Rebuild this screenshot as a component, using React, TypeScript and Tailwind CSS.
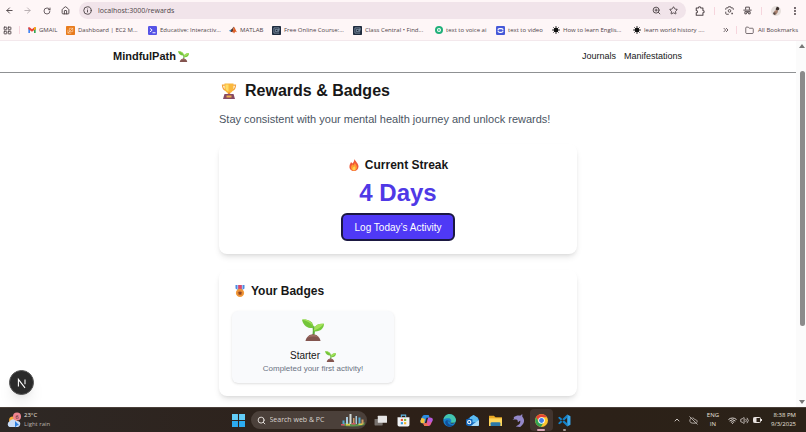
import type { ReactNode } from 'react'
import {
  ArrowLeft,
  ArrowRight,
  ChevronUp,
  ChevronsRight,
  CloudOff,
  EllipsisVertical,
  Folder,
  House,
  Info,
  LayoutGrid,
  RotateCw,
  Search,
  Star,
  Volume2,
  Wifi,
  ZoomIn,
} from 'lucide-react'

const Seedling = ({ className }: { className: string }) => (
  <svg viewBox="0 0 32 32" className={className} aria-hidden="true">
    <path d="M15 24C16 19 16 15 15 11l3-1c1 5 1 9 0 14z" fill="#5aa83a" />
    <path d="M16 13C10 14 2 11 0 1c8-1 16 2 17 11z" fill="#74c53a" />
    <path d="M0 1c6 1 12 4 16 9C13 3 8 0 0 1z" fill="#a5e25c" />
    <path d="M17 18c0-8 6-12 15-11 0 7-6 12-15 11z" fill="#74c93b" />
    <path d="M17 17c4-1 10-4 15-10-9-1-14 3-15 10z" fill="#a3e05a" />
    <path d="M5 32c1-6 6-10 11-10s10 4 11 10z" fill="#83544f" />
    <path d="M8 27c2-3 5-4 8-4 4 0 7 2 9 4-5-2-11-2-17 0z" fill="#a06f65" />
  </svg>
)

const Trophy = () => (
  <svg viewBox="0 0 32 32" className="size-4" aria-hidden="true">
    <path
      d="M8 4H3c0 7 3 10 8 11M24 4h5c0 7-3 10-8 11"
      fill="none"
      stroke="#f3a33a"
      strokeWidth="2.5"
    />
    <path d="M7 1h18v8c0 7-4 11-9 11S7 16 7 9z" fill="#fbb83c" />
    <path d="M9 3h6v14C10 15 9 12 9 9z" fill="#ffdc66" />
    <path d="M14 19h4l1 5h-6z" fill="#e78a3b" />
    <path d="M7 22h18l3 10H4z" fill="#874a62" />
    <path d="M11 25h10v4H11z" fill="#efad4b" />
  </svg>
)

const Flame = () => (
  <svg viewBox="0 0 32 32" className="size-3" aria-hidden="true">
    <path
      d="M17 0c2 6 10 10 11 19 0 8-5 13-12 13S3 27 4 19c0-5 3-7 4-11l4 4c3-3 5-7 5-12z"
      fill="#ef5736"
    />
    <path
      d="M18 9c1 5 6 7 6 13 0 5-4 9-8 9s-8-3-8-8c0-4 2-6 4-9l2 3c2-2 4-4 4-8z"
      fill="#ff9b32"
    />
    <path d="M17 19c4 3 4 11-1 11-4 0-6-5-2-8 2-1 3-2 3-3z" fill="#ffd250" />
  </svg>
)

const Medal = () => (
  <svg viewBox="0 0 32 32" className="size-3" aria-hidden="true">
    <path d="M4 0h24v9l-7 5H11L4 9z" fill="#4d8be0" />
    <path d="M11 0h10v13H11z" fill="#df4668" />
    <path d="M9 0h2v12H9zM21 0h2v12h-2z" fill="#c6dbff" />
    <circle cx="16" cy="21" r="11" fill="#f29a3b" />
    <circle cx="16" cy="21" r="7" fill="#e58a34" />
    <path d="m16 16 2 3 4 1-3 3 1 3-4-1-4 1 1-3-3-3 4-1z" fill="#8a4426" />
  </svg>
)

const GmailIcon = () => (
  <svg viewBox="0 0 24 24" className="size-2 shrink-0">
    <path d="M1 4v17h5V10z" fill="#4285f4" />
    <path d="M23 4v17h-5V10z" fill="#34a853" />
    <path d="M1 4h4l7 6 7-6h4v5l-11 8L1 9z" fill="#ea4335" />
    <path d="M19 4h4v5l-5 4V5z" fill="#fbbc04" />
  </svg>
)

const AwsIcon = () => (
  <svg viewBox="0 0 24 24" className="size-[9px] shrink-0">
    <rect width="24" height="24" rx="2" fill="#e87b1c" />
    <path
      d="M5 10v9h9M9 6h9v9H9zM5 19 19 5"
      fill="none"
      stroke="#fde3c6"
      strokeWidth="1.5"
    />
  </svg>
)

const EducativeIcon = () => (
  <svg viewBox="0 0 24 24" className="size-[9px] shrink-0">
    <rect width="24" height="24" rx="3" fill="#5653e6" />
    <path
      d="m5 6 6 5-6 5M12 18h8"
      fill="none"
      stroke="#fff"
      strokeWidth="2.5"
    />
  </svg>
)

const MatlabIcon = () => (
  <svg viewBox="0 0 24 24" className="size-2 shrink-0">
    <path d="m0 14 7-4 4 3-5 5z" fill="#3d8bc4" />
    <path d="M7 10c4-2 5-8 8-8l-4 16-5 0z" fill="#59352c" />
    <path d="M15 2c3 2 5 11 9 17-4-3-6-2-9 4-1-4-3-5-6-4 4-4 4-11 6-17z" fill="#df6027" />
  </svg>
)

const ClassCentralIcon = () => (
  <svg viewBox="0 0 24 24" className="size-[9px] shrink-0">
    <rect width="24" height="24" rx="2" fill="#1d2a3d" />
    <path
      d="M19 5H5v14h14M19 9H9v6h10M14 12h5V5"
      fill="none"
      stroke="#a9bdd0"
      strokeWidth="1.6"
    />
  </svg>
)

const VoiceIcon = () => (
  <svg viewBox="0 0 24 24" className="size-2 shrink-0">
    <circle cx="12" cy="12" r="12" fill="#20b07a" />
    <circle cx="12" cy="12" r="6" fill="#fff" />
    <path d="m10 8 6 4-6 4z" fill="#20b07a" />
  </svg>
)

const VideoIcon = () => (
  <svg viewBox="0 0 24 24" className="size-[9px] shrink-0">
    <rect width="24" height="24" rx="3" fill="#4558d8" />
    <rect x="5" y="7" width="14" height="10" rx="5" fill="none" stroke="#fff" strokeWidth="3" />
    <path d="M3 12h4M17 12h4" stroke="#4558d8" strokeWidth="2" />
  </svg>
)

const BurstIcon = () => (
  <svg viewBox="0 0 24 24" className="size-2 shrink-0">
    <circle cx="12" cy="12" r="7" fill="#111" />
    <path
      d="M12 0v24M0 12h24M4 4l16 16M20 4 4 20"
      stroke="#111"
      strokeWidth="2.5"
    />
  </svg>
)

const bookmarks = [
  { label: 'GMAIL', icon: <GmailIcon />, width: 'w-[38px]' },
  { label: 'Dashboard | EC2 M...', icon: <AwsIcon />, width: 'w-[82px]' },
  { label: 'Educative: Interactiv...', icon: <EducativeIcon />, width: 'w-[81px]' },
  { label: 'MATLAB', icon: <MatlabIcon />, width: 'w-[43px]' },
  { label: 'Free Online Course:...', icon: <ClassCentralIcon />, width: 'w-[81px]' },
  { label: 'Class Central • Find...', icon: <ClassCentralIcon />, width: 'w-[82px]' },
  { label: 'text to voice ai', icon: <VoiceIcon />, width: 'w-[61px]' },
  { label: 'text to video', icon: <VideoIcon />, width: 'w-[56px]' },
  { label: 'How to learn Englis...', icon: <BurstIcon />, width: 'w-[81px]' },
  { label: 'learn world history ....', icon: <BurstIcon />, width: 'w-[81px]' },
]

const IconButton = ({
  label,
  className,
  children,
}: {
  label: string
  className: string
  children: ReactNode
}) => (
  <button
    type="button"
    aria-label={label}
    className={`flex shrink-0 items-center justify-center ${className}`}
  >
    {children}
  </button>
)

const BrowserBar = () => (
  <header className="border-b border-[#f3e8ec] bg-[#fef6f7] font-['Open_Sans','Noto_Sans',sans-serif] text-[#4f4549]">
    <div className="flex h-5 items-center pt-px">
      <IconButton label="Back" className="w-[18px]">
        <ArrowLeft className="size-[9px]" strokeWidth={2.5} />
      </IconButton>
      <IconButton label="Forward" className="w-[19px] text-[#b5acaf]">
        <ArrowRight className="size-[9px]" strokeWidth={2.5} />
      </IconButton>
      <IconButton label="Reload" className="w-[19px]">
        <RotateCw className="size-2" strokeWidth={2.5} />
      </IconButton>
      <IconButton label="Home" className="w-[19px]">
        <House className="size-[9px]" strokeWidth={2.5} />
      </IconButton>
      <div className="ml-1 flex h-[17px] flex-1 items-center rounded-full bg-[#f1e4ea] px-1">
        <Info className="size-[9px] shrink-0" strokeWidth={2.5} />
        <input
          type="text"
          aria-label="Address"
          defaultValue="localhost:3000/rewards"
          className="ml-[6px] min-w-0 flex-1 bg-transparent text-[7px] leading-3 outline-none"
        />
        <IconButton label="Zoom" className="w-[17px]">
          <ZoomIn className="size-[9px]" strokeWidth={2.5} />
        </IconButton>
        <IconButton label="Bookmark this page" className="w-[17px]">
          <Star className="size-[9px]" strokeWidth={2.5} />
        </IconButton>
      </div>
      <IconButton label="Extensions" className="w-[28px]">
        <svg viewBox="0 0 24 24" className="size-[10px]" fill="none" stroke="currentColor" strokeWidth="2.5" strokeLinejoin="round">
          <path d="M3 5h5c0-4 6-4 6 0h5v6c4 0 4 5 0 5v6H3v-6c4 0 4-5 0-5z" />
        </svg>
      </IconButton>
      <span className="h-2 w-px bg-[#f6d5dd]" />
      <IconButton label="Search with Lens" className="ml-1 w-5">
        <svg viewBox="0 0 24 24" className="size-[9px]" fill="none" stroke="currentColor" strokeWidth="2.5">
          <path d="M2 10V7q0-2 2-2h4l1-3h6l1 3h4q2 0 2 2v3M2 15v5q0 2 2 2h6" />
          <circle cx="12" cy="13" r="3.5" />
          <path d="M17 20h4" strokeWidth="4" />
        </svg>
      </IconButton>
      <IconButton label="Private" className="w-4">
        <svg viewBox="0 0 24 24" className="size-[9px]" fill="none" stroke="currentColor" strokeWidth="2.5">
          <path d="M7 10V3h10v7M1 11h22M5 15h14v6h-4l-1-4h-4l-1 4H5z" />
        </svg>
      </IconButton>
      <span className="ml-[6px] h-2 w-px bg-[#f6d5dd]" />
      <IconButton label="Profile" className="w-[28px]">
        <svg viewBox="0 0 24 24" className="size-[10px]">
          <circle cx="12" cy="12" r="12" fill="#e6dfdc" />
          <path d="M14 2c5 0 7 4 5 7l-5 3-3-4z" fill="#3b302d" />
          <path d="m8 12 6-3 3 5-5 7-6-2z" fill="#a8806f" />
          <path d="m6 15 5 1-1 6-5-3z" fill="#594b47" />
        </svg>
      </IconButton>
      <IconButton label="Menu" className="w-4 pr-[6px]">
        <EllipsisVertical className="size-[10px]" strokeWidth={3} />
      </IconButton>
    </div>
    <nav aria-label="Bookmarks" className="flex h-5 items-center pl-[3px] text-[6px] leading-3">
      <LayoutGrid className="size-[9px] shrink-0" strokeWidth={2.5} />
      <span className="mr-2 ml-[7px] h-2 w-px shrink-0 bg-[#f6d5dd]" />
      {bookmarks.map((item, index) => (
        <a
          href="#"
          key={index}
          className={`flex shrink-0 items-center gap-[3px] whitespace-nowrap ${item.width}`}
        >
          {item.icon}
          {item.label}
        </a>
      ))}
      <IconButton label="More bookmarks" className="ml-2">
        <ChevronsRight className="size-2" strokeWidth={2.5} />
      </IconButton>
      <span className="ml-auto h-2 w-px shrink-0 bg-[#f6d5dd]" />
      <a href="#" className="mr-2 ml-2 flex shrink-0 items-center gap-1 whitespace-nowrap">
        <Folder className="size-[9px]" strokeWidth={2} />
        All Bookmarks
      </a>
    </nav>
  </header>
)

const SiteHeader = () => (
  <header className="border-b border-[#8f9193]">
    <div className="mx-auto flex h-[31px] max-w-[570px] items-center justify-between">
      <a href="#" className="flex items-center gap-[2px] text-[11px] font-bold">
        MindfulPath <Seedling className="size-[11px]" />
      </a>
      <nav className="flex gap-2 pr-px text-[9px]">
        <a href="#">Journals</a>
        <a href="#">Manifestations</a>
      </nav>
    </div>
  </header>
)

const Rewards = () => (
  <main className="mx-auto w-full max-w-[358px] pt-[6px] pb-2">
    <h1 className="flex items-center gap-2 pl-[2px] text-base leading-6 font-bold">
      <Trophy /> Rewards &amp; Badges
    </h1>
    <p className="mt-2 text-[11px] leading-4 text-[#4b5563]">
      Stay consistent with your mental health journey and unlock rewards!
    </p>
    <section className="mt-[17px] flex flex-col items-center rounded-lg bg-white p-[13px] text-center shadow-md">
      <h2 className="flex items-center gap-[5px] text-xs leading-4 font-bold">
        <Flame /> Current Streak
      </h2>
      <p className="mt-2 text-2xl leading-6 font-bold text-[#4f39e6]">4 Days</p>
      <button
        type="button"
        className="mt-2 h-7 rounded-md border-2 border-[#1b1842] bg-[#4f39f6] px-3 text-[10px] text-white"
      >
        Log Today’s Activity
      </button>
    </section>
    <section className="mt-4 rounded-lg bg-white p-[13px] shadow-md">
      <h2 className="flex items-center gap-[5px] pl-[2px] text-xs leading-4 font-bold">
        <Medal /> Your Badges
      </h2>
      <div className="mt-3 grid grid-cols-2 gap-2">
        <div className="flex flex-col items-center rounded-md bg-[#f9fafc] p-2 text-center shadow-sm">
          <Seedling className="size-[22px]" />
          <h3 className="mt-2 flex items-center gap-[5px] text-[10px] leading-[14px]">
            Starter <Seedling className="size-[11px]" />
          </h3>
          <p className="text-[8px] leading-3 text-[#6a7282]">
            Completed your first activity!
          </p>
        </div>
      </div>
    </section>
  </main>
)

const Scrollbar = () => (
  <div className="flex w-[10px] flex-col items-center bg-[#fbfbfb] py-[2px] pl-[2px]" aria-hidden="true">
    <svg viewBox="0 0 6 6" className="size-[6px]">
      <path d="M3 1 6 5H0z" fill="#777" />
    </svg>
    <div className="mt-[22px] h-[255px] w-[5px] rounded-full bg-[#8b8b8b]" />
    <svg viewBox="0 0 6 6" className="mt-auto size-[6px]">
      <path d="M3 5 6 1H0z" fill="#777" />
    </svg>
  </div>
)

const taskbarApps = [
  {
    label: 'Task view',
    icon: (
      <svg viewBox="0 0 24 24" className="size-[13px]">
        <rect x="1" y="9" width="15" height="12" rx="1" fill="#77716d" />
        <rect x="7" y="3" width="17" height="13" rx="1" fill="#e6e5e5" />
      </svg>
    ),
  },
  {
    label: 'Microsoft Store',
    icon: (
      <svg viewBox="0 0 24 24" className="size-[13px]">
        <path d="M8 6V2h8v4" fill="none" stroke="#61b8e6" strokeWidth="2" />
        <path d="M1 6h22v14q0 3-3 3H4q-3 0-3-3z" fill="#f2f4f6" />
        <path d="M7 9h4v4H7z" fill="#e95030" />
        <path d="M13 9h4v4h-4z" fill="#7eb83b" />
        <path d="M7 15h4v4H7z" fill="#329bdc" />
        <path d="M13 15h4v4h-4z" fill="#f3b72f" />
      </svg>
    ),
  },
  {
    label: 'Copilot',
    icon: (
      <svg viewBox="0 0 24 24" className="size-[13px]">
        <path d="M8 2h8l2 5h-6L9 17H4q-4 0-3-5l3-7q1-3 4-3z" fill="#2b8ce0" />
        <path d="M1 12 3 7l6 2-1 8H4q-4 0-3-5z" fill="#f4c33c" />
        <path d="M15 7h5q4 0 3 5l-3 7q-1 3-4 3H8l-2-5h6z" fill="#e25c9c" />
        <path d="M15 7h5q4 0 3 5l-1 3-8-2z" fill="#b35be0" />
        <path d="m6 17 6 0 3 5H9q-2 0-3-5z" fill="#ef7548" />
      </svg>
    ),
  },
  {
    label: 'Edge',
    icon: (
      <svg viewBox="0 0 24 24" className="size-[13px]">
        <circle cx="12" cy="12" r="11.5" fill="#1782cd" />
        <path d="M1 10C2 4 7 0 12 0c7 0 12 6 12 11 0 5-5 7-10 5 3-3 1-8-4-8-4 0-7 1-9 2z" fill="#43c5ae" />
        <path d="M9 11c-2 6 3 11 11 9-6 6-15 3-16-4 0-3 2-5 5-5z" fill="#124f9a" />
        <path d="M11 11q-2 3 2 5l9 0q-3 2-8 1-3-1-3-6z" fill="#2e251f" />
      </svg>
    ),
  },
  {
    label: 'Outlook',
    icon: (
      <svg viewBox="0 0 24 24" className="size-[13px]">
        <path d="m3 9 11-7 10 7v13H3z" fill="#1d73c9" />
        <path d="m7 6 7-4 8 5v8H7z" fill="#5cbcf2" />
        <path d="m8 22 16-11v9q0 2-2 2z" fill="#a9dcf8" />
        <rect y="9" width="12" height="12" rx="2" fill="#1163b6" />
        <circle cx="6" cy="15" r="3" fill="none" stroke="#fff" strokeWidth="2" />
      </svg>
    ),
  },
  {
    label: 'File Explorer',
    icon: (
      <svg viewBox="0 0 24 24" className="size-[13px]">
        <path d="M0 3h9l3 3h12v16H0z" fill="#e9a823" />
        <path d="M0 8h24v14H0z" fill="#ffd65a" />
        <path d="M5 15h14q2 0 2 2v5H3v-5q0-2 2-2z" fill="#2b79a8" />
      </svg>
    ),
  },
  {
    label: 'MySQL Workbench',
    icon: (
      <svg viewBox="0 0 24 24" className="size-[13px]">
        <path
          d="M3 6c4-3 8-4 12-3l4-3v5c5 5 4 12-1 16l-3 3-8-1 5-3c3-2 4-5 3-8l-4 3-1-4c-3-1-6-1-9 0l3-3z"
          fill="#9488c9"
        />
      </svg>
    ),
  },
  {
    label: 'Chrome',
    active: true,
    icon: (
      <svg viewBox="0 0 24 24" className="size-[13px]">
        <circle cx="12" cy="12" r="12" fill="#fbc52d" />
        <path d="M2 6a12 12 0 0 1 20 0H12a6 6 0 0 0-5 8z" fill="#e34133" />
        <path d="M2 6a12 12 0 0 0 9 18l5-9a6 6 0 0 1-9 0z" fill="#33a353" />
        <circle cx="12" cy="12" r="6" fill="#fff" />
        <circle cx="12" cy="12" r="4.5" fill="#3e7de8" />
      </svg>
    ),
  },
  {
    label: 'VS Code',
    running: true,
    icon: (
      <svg viewBox="0 0 24 24" className="size-[13px]">
        <path d="m17 1 6 3v16l-6 3z" fill="#38a9ee" />
        <path d="M17 1v6L3 19l-3-2zM17 23v-6L3 5 0 7z" fill="#1583ca" />
      </svg>
    ),
  },
]

const Taskbar = () => (
  <footer className="flex h-[25px] items-center border-t border-[#4a403a] bg-linear-to-r from-[#2e2825] via-[#2d2018] to-[#2b2218] font-['Open_Sans','Noto_Sans',sans-serif] text-[#e8e2df]">
    <button type="button" className="flex flex-1 items-center gap-[2px] pl-[7px] text-left">
      <svg viewBox="0 0 30 32" className="h-4 w-[15px]">
        <circle cx="12" cy="17" r="8" fill="#f3a83a" />
        <path d="M5 30a6 6 0 0 1 0-11 8 8 0 0 1 14-1c6-1 9 4 7 8-1 3-3 4-6 4z" fill="#c9dcf6" />
        <path d="m16 18 8 8-4 1-4 4z" fill="#2c7fe0" />
        <circle cx="20" cy="9" r="8" fill="#ef8490" />
        <text x="20" y="13" textAnchor="middle" fontSize="11" fill="#3a1d20">
          6
        </text>
      </svg>
      <span className="text-[6px] leading-[9px]">
        <span className="block">23°C</span>
        <span className="block text-[#b9b1ac]">Light rain</span>
      </span>
    </button>
    <div className="flex items-center pl-1">
      <IconButton label="Start" className="w-[13px]">
        <svg viewBox="0 0 24 24" className="size-[13px]">
          <path d="M0 0h11v11H0zM13 0h11v11H13z" fill="#62cdf8" />
          <path d="M0 13h11v11H0zM13 13h11v11H13z" fill="#2cabf0" />
        </svg>
      </IconButton>
      <div className="mr-[2px] ml-[6px] flex h-[18px] w-[116px] items-center rounded-full bg-[#4b403a] pr-[2px] pl-[6px]">
        <Search className="size-[9px] shrink-0" strokeWidth={2.5} />
        <input
          type="search"
          aria-label="Search"
          placeholder="Search web &amp; PC"
          className="ml-1 min-w-0 flex-1 bg-transparent text-[7px] leading-3 outline-none placeholder:text-[#d9d2ce]"
        />
        <svg viewBox="0 0 50 28" className="h-[14px] w-[25px]">
          <path d="M1 24q12-7 24-3t24-3v6q-24 6-48 0z" fill="#5c944b" />
          <path d="M5 15h4v9H5zM37 9h4v14h-4z" fill="#55a9cc" />
          <path d="M12 8h4v15h-4zM31 6h3v16h-3z" fill="#a9c9dc" />
          <path d="M19 2h4v20h-4z" fill="#d2d8d5" />
          <path d="M26 10h3v12h-3zM43 13h4v9h-4z" fill="#cc9a64" />
          <path d="M2 22h7v3H2zM23 20h8v3h-8z" fill="#cf5364" />
          <path d="M12 22h8v3h-8zM37 21h8v3h-8z" fill="#e0c64a" />
        </svg>
      </div>
      {taskbarApps.map((app) => (
        <button
          type="button"
          key={app.label}
          aria-label={app.label}
          className={`relative flex h-[22px] w-[23px] items-center justify-center rounded-sm ${app.active ? 'bg-[#42352f]' : ''}`}
        >
          {app.icon}
          {app.active && (
            <span className="absolute bottom-0 h-[2px] w-2 rounded-full bg-[#d8a5b5]" />
          )}
          {app.running && (
            <span className="absolute bottom-0 h-[2px] w-[3px] rounded-full bg-[#a39a96]" />
          )}
        </button>
      ))}
    </div>
    <div className="flex flex-1 items-center justify-end pr-[10px] text-[6px] leading-[9px]">
      <IconButton label="Hidden icons" className="w-4">
        <ChevronUp className="size-2" strokeWidth={2.5} />
      </IconButton>
      <CloudOff className="ml-1 size-[9px] text-[#b9b1ac]" strokeWidth={2.5} />
      <span className="mx-[9px] text-center">
        <span className="block">ENG</span>
        <span className="block">IN</span>
      </span>
      <Wifi className="size-[9px]" strokeWidth={2.5} />
      <Volume2 className="ml-[3px] size-[9px]" strokeWidth={2} />
      <svg viewBox="0 0 18 12" className="ml-1 h-[6px] w-[9px]">
        <rect x="1" y="1" width="14" height="10" rx="2" fill="none" stroke="#e8e2df" strokeWidth="2" />
        <path d="M1 1h6v10H1zM16 4h2v4h-2z" fill="#e8e2df" />
      </svg>
      <time dateTime="2025-09-03T20:38" className="ml-[9px] text-right">
        <span className="block">8:38 PM</span>
        <span className="block">9/3/2025</span>
      </time>
    </div>
  </footer>
)

export default function App() {
  return (
    <div className="flex min-h-screen flex-col bg-white">
      <BrowserBar />
      <div className="relative flex flex-1">
        <div className="min-w-0 flex-1 font-['Liberation_Sans',Arial,sans-serif] text-[#171717]">
          <SiteHeader />
          <Rewards />
        </div>
        <Scrollbar />
        <button
          type="button"
          aria-label="Open developer tools"
          className="absolute bottom-3 left-[9px] flex size-[25px] items-center justify-center rounded-full border border-[#555] bg-[#2a2a2a] shadow-lg"
        >
          <svg viewBox="0 0 20 20" className="size-3" fill="none" stroke="#fff" strokeWidth="1.8">
            <path d="M4 16V4l11 14M15 4v8" />
          </svg>
        </button>
      </div>
      <Taskbar />
    </div>
  )
}
